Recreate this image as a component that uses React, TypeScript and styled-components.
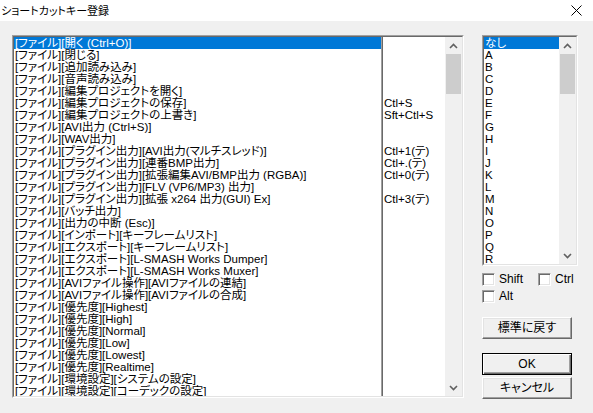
import React from 'react';
import styled, { createGlobalStyle } from 'styled-components';

const GlobalStyle = createGlobalStyle`
  html, body {
    margin: 0;
    padding: 0;
    background: #f0f0f0;
  }
  body {
    font-family: "Liberation Sans", "Noto Sans CJK JP", sans-serif;
    font-feature-settings: "palt";
    color: #000;
  }
`;

const Window = styled.div`
  width: 593px;
  height: 413px;
  display: flex;
  flex-direction: column;
  background: #f0f0f0;
  overflow: hidden;
`;

const TitleBar = styled.div`
  height: 21px;
  flex: none;
  background: #ffffff;
  display: flex;
  align-items: center;
  justify-content: space-between;
  padding: 0 11px 0 1px;
`;

const Title = styled.span`
  font-family: "Noto Sans CJK JP", sans-serif;
  font-size: 11px;
  line-height: 14px;
  padding-bottom: 1px;
`;

const Body = styled.div`
  display: flex;
  flex-direction: row;
  gap: 18px;
  padding: 14px 0 0 12px;
`;

// sunken listbox border, two pixels
const Frame = styled.div<{ w: number; h: number }>`
  width: ${p => p.w}px;
  height: ${p => p.h}px;
  box-sizing: border-box;
  border: 1px solid;
  border-color: #a0a0a0 #ffffff #ffffff #a0a0a0;
  flex: none;
`;

const FrameInner = styled.div`
  height: 100%;
  box-sizing: border-box;
  border: 1px solid;
  border-color: #696969 #e3e3e3 #e3e3e3 #696969;
  background: #ffffff;
  display: flex;
  flex-direction: row;
  overflow: hidden;
`;

const Column = styled.div<{ w: number }>`
  width: ${p => p.w}px;
  flex: none;
  display: flex;
  flex-direction: column;
  overflow: hidden;
`;

const Divider = styled.div`
  width: 1px;
  flex: none;
  border-left: 1px solid #a0a0a0;
  background: #696969;
`;

const Row = styled.div<{ selected?: boolean }>`
  height: 12px;
  flex: none;
  line-height: 12px;
  font-size: 11.5px;
  padding-left: 1px;
  white-space: nowrap;
  background: ${p => (p.selected ? '#0078d7' : 'transparent')};
  color: ${p => (p.selected ? '#ffffff' : '#000000')};
`;

const ScrollBar = styled.div`
  width: 17px;
  flex: none;
  background: #f0f0f0;
  display: flex;
  flex-direction: column;
`;

const ArrowButton = styled.div`
  height: 17px;
  flex: none;
  display: flex;
  align-items: center;
  justify-content: center;
`;

const Thumb = styled.div`
  height: 40px;
  margin: 0 1px;
  background: #cdcdcd;
`;

const Track = styled.div`
  flex: 1;
`;

const Side = styled.div`
  width: 96px;
  display: flex;
  flex-direction: column;
`;

const Checks = styled.div`
  margin-top: 7px;
  display: flex;
  flex-direction: column;
  gap: 4px;
`;

const CheckRow = styled.div`
  display: flex;
  flex-direction: row;
`;

const Check = styled.label`
  width: 56px;
  flex: none;
  height: 13px;
  display: flex;
  align-items: center;
  gap: 4px;
  font-size: 12px;
  line-height: 13px;
`;

const Box = styled.span`
  width: 13px;
  height: 13px;
  box-sizing: border-box;
  flex: none;
  border: 1px solid;
  border-color: #a0a0a0 #ffffff #ffffff #a0a0a0;
  background: #ffffff;
  box-shadow: inset 1px 1px #696969, inset -1px -1px #e3e3e3;
`;

const Button = styled.button<{ primary?: boolean; gapTop: number }>`
  width: 90px;
  height: 22px;
  margin-top: ${p => p.gapTop}px;
  padding: 0;
  box-sizing: border-box;
  font-family: "Liberation Sans", "Noto Sans CJK JP", sans-serif;
  font-feature-settings: "palt";
  font-size: 12px;
  line-height: 16px;
  color: #000;
  background: #f0f0f0;
  border: 1px solid;
  border-color: ${p => (p.primary ? '#000 #000 #000 #000' : '#fff #696969 #696969 #fff')};
  box-shadow: ${p =>
    p.primary
      ? 'inset 1px 1px #fff, inset -1px -1px #696969, inset -2px -2px #a0a0a0'
      : 'inset -1px -1px #a0a0a0, inset 1px 1px #e3e3e3'};
`;

const Chevron = ({ down }: { down?: boolean }) => (
  <svg width="9" height="6" viewBox="0 0 9 6">
    <polyline
      points={down ? '1,1 4.5,4.5 8,1' : '1,5 4.5,1.5 8,5'}
      fill="none"
      stroke="#606060"
      strokeWidth="1.6"
    />
  </svg>
);

const Scroller = () => (
  <ScrollBar>
    <ArrowButton><Chevron /></ArrowButton>
    <Thumb />
    <Track />
    <ArrowButton><Chevron down /></ArrowButton>
  </ScrollBar>
);

const commands: [string, string][] = [
  ['[ファイル][開く (Ctrl+O)]', ''],
  ['[ファイル][閉じる]', ''],
  ['[ファイル][追加読み込み]', ''],
  ['[ファイル][音声読み込み]', ''],
  ['[ファイル][編集プロジェクトを開く]', ''],
  ['[ファイル][編集プロジェクトの保存]', 'Ctl+S'],
  ['[ファイル][編集プロジェクトの上書き]', 'Sft+Ctl+S'],
  ['[ファイル][AVI出力 (Ctrl+S)]', ''],
  ['[ファイル][WAV出力]', ''],
  ['[ファイル][プラグイン出力][AVI出力(マルチスレッド)]', 'Ctl+1(テ)'],
  ['[ファイル][プラグイン出力][連番BMP出力]', 'Ctl+.(テ)'],
  ['[ファイル][プラグイン出力][拡張編集AVI/BMP出力 (RGBA)]', 'Ctl+0(テ)'],
  ['[ファイル][プラグイン出力][FLV (VP6/MP3) 出力]', ''],
  ['[ファイル][プラグイン出力][拡張 x264 出力(GUI) Ex]', 'Ctl+3(テ)'],
  ['[ファイル][バッチ出力]', ''],
  ['[ファイル][出力の中断 (Esc)]', ''],
  ['[ファイル][インポート][キーフレームリスト]', ''],
  ['[ファイル][エクスポート][キーフレームリスト]', ''],
  ['[ファイル][エクスポート][L-SMASH Works Dumper]', ''],
  ['[ファイル][エクスポート][L-SMASH Works Muxer]', ''],
  ['[ファイル][AVIファイル操作][AVIファイルの連結]', ''],
  ['[ファイル][AVIファイル操作][AVIファイルの合成]', ''],
  ['[ファイル][優先度][Highest]', ''],
  ['[ファイル][優先度][High]', ''],
  ['[ファイル][優先度][Normal]', ''],
  ['[ファイル][優先度][Low]', ''],
  ['[ファイル][優先度][Lowest]', ''],
  ['[ファイル][優先度][Realtime]', ''],
  ['[ファイル][環境設定][システムの設定]', ''],
  ['[ファイル][環境設定][コーデックの設定]', ''],
];

const keys = ['なし', ...'ABCDEFGHIJKLMNOPQR'.split('')];

const App: React.FC = () => {
  return (
    <>
      <GlobalStyle />
      <Window>
        <TitleBar>
          <Title>ショートカットキー登録</Title>
          <svg width="11" height="11" viewBox="0 0 11 11">
            <path d="M0.5 0.5 L10.5 10.5 M10.5 0.5 L0.5 10.5" stroke="#000" strokeWidth="1" fill="none" />
          </svg>
        </TitleBar>
        <Body>
          <Frame w={452} h={363}>
            <FrameInner>
              <Column w={367}>
                {commands.map(([name], i) => (
                  <Row key={i} selected={i === 0}>{name}</Row>
                ))}
              </Column>
              <Divider />
              <Column w={62}>
                {commands.map(([, shortcut], i) => (
                  <Row key={i}>{shortcut}</Row>
                ))}
              </Column>
              <Scroller />
            </FrameInner>
          </Frame>
          <Side>
            <Frame w={96} h={231}>
              <FrameInner>
                <Column w={75}>
                  {keys.map((k, i) => (
                    <Row key={k} selected={i === 0}>{k}</Row>
                  ))}
                </Column>
                <Scroller />
              </FrameInner>
            </Frame>
            <Checks>
              <CheckRow>
                <Check><Box />Shift</Check>
                <Check><Box />Ctrl</Check>
              </CheckRow>
              <CheckRow>
                <Check><Box />Alt</Check>
              </CheckRow>
            </Checks>
            <Button gapTop={14}>標準に戻す</Button>
            <Button gapTop={14} primary>OK</Button>
            <Button gapTop={2}>キャンセル</Button>
          </Side>
        </Body>
      </Window>
    </>
  );
};

export default App;
